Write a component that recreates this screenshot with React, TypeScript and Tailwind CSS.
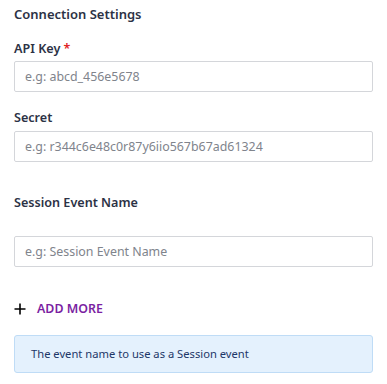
import React from "react";

const Field = ({ placeholder }: { placeholder: string }) => (
  <input
    className="block w-full h-[31px] px-[10px] border border-[#d4d6da] rounded-[2px] bg-white text-[12.4px] text-[#333] placeholder:text-[#80848c] outline-none"
    placeholder={placeholder}
  />
);

const App = () => {
  return (
    <div
      className="w-[387px] h-[384px] bg-white px-[14px] pt-[5px] text-[#2c3245]"
      style={{ fontFamily: '"Noto Sans", "Open Sans", sans-serif' }}
    >
      <h3 className="text-[13px] leading-[18px] font-semibold">Connection Settings</h3>

      <label className="block mt-[17px] mb-[3px] text-[12.6px] leading-[18px] font-semibold">
        API Key <span className="text-[#e02424]">*</span>
      </label>
      <Field placeholder="e.g: abcd_456e5678" />

      <label className="block mt-[17px] mb-[4px] text-[12.6px] leading-[18px] font-semibold">Secret</label>
      <Field placeholder="e.g: r344c6e48c0r87y6iio567b67ad61324" />

      <label className="block mt-[32px] mb-[24px] text-[12.6px] leading-[18px] font-semibold">
        Session Event Name
      </label>
      <Field placeholder="e.g: Session Event Name" />

      <button className="flex items-center gap-[11px] mt-[33px] text-[12.4px] leading-[18px] font-semibold">
        <svg width="12" height="12" viewBox="0 0 12 12" className="text-black">
          <path d="M6 0.5v11M0.5 6h11" stroke="currentColor" strokeWidth="1.6" />
        </svg>
        <span className="text-[#7b1fa2]">ADD MORE</span>
      </button>

      <div className="mt-[17px] h-[38px] flex items-center px-[16px] border border-[#bfdcf6] bg-[#e4f1fd] rounded-[3px] text-[11.2px] text-[#1d3768]">
        The event name to use as a Session event
      </div>
    </div>
  );
};

export default App;
